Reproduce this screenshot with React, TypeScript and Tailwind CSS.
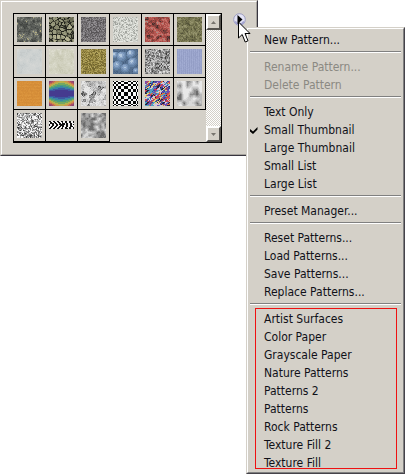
import { useState } from 'react';
import clsx from 'clsx';

type Shade = (x: number, y: number) => number;

interface Pattern {
  name: string;
  colors: string[];
  shade: Shade;
}

const SIZE = 25;

const hash = (x: number, y: number, seed: number) => {
  let h = Math.imul(x + 101, 374761393) + Math.imul(y + 57, 668265263) + Math.imul(seed, 974634777);
  h = Math.imul(h ^ (h >>> 13), 1274126177);
  h = Math.imul(h ^ (h >>> 16), 2246822519);
  return ((h ^ (h >>> 15)) >>> 0) / 4294967296;
};

// smooth value noise, sx and sy are the blob size in pixels
const noise = (seed: number, sx: number, sy = sx, contrast = 1.5): Shade => (x, y) => {
  const gx = Math.floor(x / sx);
  const gy = Math.floor(y / sy);
  const fx = x / sx - gx;
  const fy = y / sy - gy;
  const top = hash(gx, gy, seed) * (1 - fx) + hash(gx + 1, gy, seed) * fx;
  const bottom = hash(gx, gy + 1, seed) * (1 - fx) + hash(gx + 1, gy + 1, seed) * fx;
  return (top * (1 - fy) + bottom * fy - 0.5) * contrast + 0.5;
};

// blobs broken up with single pixel grain
const grainy = (seed: number, sx: number, sy: number, amount: number): Shade => {
  const base = noise(seed, sx, sy, 1.4);
  return (x, y) => base(x, y) * (1 - amount) + hash(x, y, seed + 5) * amount;
};

// nearest stone centre: its tone and the distance to the next stone's edge
const nearest = (seed: number, step: number, x: number, y: number) => {
  let first = 99;
  let second = 99;
  let tone = 0;
  const cx = Math.floor(x / step);
  const cy = Math.floor(y / step);
  for (let j = cy - 1; j <= cy + 1; j++) {
    for (let i = cx - 1; i <= cx + 1; i++) {
      const dx = (i + hash(i, j, seed)) * step - x;
      const dy = (j + hash(i, j, seed + 1)) * step - y;
      const d = Math.sqrt(dx * dx + dy * dy);
      if (d < first) {
        second = first;
        first = d;
        tone = hash(i, j, seed + 2);
      } else if (d < second) {
        second = d;
      }
    }
  }
  return { tone, edge: second - first };
};

// rounded stones with dark gaps between them
const stones = (seed: number, step: number, gap: number, grain: number): Shade => (x, y) => {
  const { tone, edge } = nearest(seed, step, x, y);
  return Math.min(1, edge / (step * gap)) * (0.55 + tone * 0.45) - hash(x, y, seed) * grain;
};

// flat angular pieces, each with its own tone
const shards = (seed: number, step: number, grain: number): Shade => (x, y) =>
  nearest(seed, step, x, y).tone * (1 - grain) + hash(x, y, seed) * grain + 0.1;

// glossy balls lit from the top left
const bubbles: Shade = (x, y) => {
  const balls = [
    [9, 8, 6],
    [18, 5, 5],
    [20, 14, 6],
    [5, 17, 6],
    [13, 20, 6],
    [2, 6, 4],
    [23, 22, 4],
  ];
  let best = 0.1 + hash(x, y, 3) * 0.15;
  balls.forEach(([bx, by, r]) => {
    const d = Math.hypot(x - bx, y - by) / r;
    if (d < 1) {
      const light = Math.hypot(x - bx + r * 0.3, y - by + r * 0.35) / r;
      best = Math.max(best, 0.92 - light * 0.6 - (by / SIZE) * 0.15);
    }
  });
  return best;
};

const checker: Shade = (x, y) => {
  const bend = (v: number) => Math.sign(v) * Math.asin(Math.min(1, Math.abs(v) / 13)) * 11;
  const a = Math.floor((bend(x - 12) + 41.5) / 2.7);
  const b = Math.floor((bend(y - 12) + 41.5) / 2.7);
  return (a + b) % 2 ? 0.9 : 0;
};

const rainbow: Shade = (x, y) => {
  const dx = Math.abs(x - 12) / 12;
  const dy = Math.abs(y - 12) / 12;
  return dy * 0.62 + dx * dx * dy * 0.4;
};

const braid: Shade = (x, y) => {
  if (y < 8 || y > 15) return 0;
  const lean = y < 12 ? y - 8 : 15 - y;
  const slant = x < 13 ? x - lean + 40 : x + 40 - Math.floor(lean / 2);
  if (hash(x, y, 4) > 0.88) return 0.4;
  return slant % 4 < 2 ? 0.4 : 0.9;
};

const GRAYS = ['#3b3b3b', '#626262', '#888888', '#aaaaaa', '#cacaca', '#e4e4e4'];

const PATTERNS: Pattern[] = [
  { name: 'Dark Slate', colors: ['#3f423f', '#4a4d49', '#555854', '#60635e', '#6e716a', '#85877c', '#b3ad80'], shade: grainy(3, 2.3, 3.4, 0.35) },
  { name: 'Pebbles', colors: ['#23241d', '#46473a', '#6b6c56', '#85866c', '#9b9c80', '#b5b392'], shade: stones(8, 4.2, 0.3, 0.15) },
  { name: 'Granite', colors: ['#575456', '#656264', '#716e71', '#7f7c7f', '#928f92'], shade: noise(5, 1, 1, 1) },
  { name: 'Light Granite', colors: ['#a2a59f', '#bbbdb7', '#cccec8', '#d5d7d1', '#dddfd9', '#e5e7e1'], shade: noise(12, 1, 1, 1) },
  { name: 'Red Rock', colors: ['#4a2f2d', '#7a403c', '#a04842', '#b55650', '#c6716a', '#a98a82'], shade: grainy(22, 2.4, 2.1, 0.35) },
  { name: 'Moss', colors: ['#55543a', '#676646', '#777650', '#85845e', '#96946e'], shade: grainy(19, 1.7, 1.6, 0.5) },
  { name: 'Pale Paper', colors: ['#c5caca', '#cacfcf', '#ced2d1', '#d1d4d3', '#d5d7d5'], shade: grainy(31, 3.3, 5.2, 0.3) },
  { name: 'Parchment', colors: ['#c8c8b4', '#cecebb', '#d2d2c1', '#d6d6c6', '#dddccf'], shade: grainy(37, 2.2, 3.4, 0.35) },
  { name: 'Gold Weave', colors: ['#72662f', '#857739', '#958641', '#a2934d', '#b3a560'], shade: noise(41, 1, 1, 1) },
  { name: 'Blue Stones', colors: ['#465f80', '#56708f', '#6482a5', '#7591b5', '#8ba6c8', '#b4c9de', '#dbe6f0'], shade: bubbles },
  { name: 'Gray Grit', colors: GRAYS, shade: grainy(48, 1.6, 1.3, 0.5) },
  { name: 'Blue Denim', colors: ['#939dc5', '#98a2ca', '#9da7ce', '#a2acd2'], shade: (x, y) => (x % 2) * 0.45 + hash(x, y, 2) * 0.45 },
  { name: 'Orange Paper', colors: ['#d28b38', '#d68e38', '#d9923b', '#dc963f'], shade: (x, y) => (y % 3) * 0.15 + hash(x, y, 9) * 0.6 },
  {
    name: 'Spectrum',
    colors: ['#453b8f', '#453b8f', '#3e58a0', '#3b84a5', '#4a9d80', '#74a861', '#b7b04b', '#d1914b', '#c26a54', '#a54c68', '#8a4470'],
    shade: rainbow,
  },
  { name: 'Broken Glass', colors: ['#4c4c4c', '#808080', '#a8a8a8', '#c4c4c4', '#d6d6d6', '#e6e6e6'], shade: shards(64, 4.5, 0.3) },
  { name: 'Checker', colors: ['#050505', '#fafafa'], shade: checker },
  {
    name: 'Confetti',
    colors: ['#25243f', '#c74355', '#50a2be', '#ded277', '#704bb1', '#db7645', '#d3c5d9', '#3e479e'],
    shade: (x, y) => hash(Math.floor((x + (y % 3)) / 2), Math.floor((y + (x % 5) * 0.5) / 1.6), 73),
  },
  {
    name: 'Soft Clouds',
    colors: ['#6c6c6c', '#8e8e8e', '#a8a8a8', '#bababa', '#cacaca', '#d8d8d8', '#e8e8e8'],
    shade: (x, y) => noise(80, 3.3, 4.3, 1.3)(x, y) + 0.1,
  },
  { name: 'Scribble', colors: ['#424242', '#777777', '#b2b2b2', '#eeeeee', '#ffffff'], shade: grainy(87, 1.3, 1.3, 0.6) },
  { name: 'Braid', colors: ['#d4d0c8', '#111111', '#f4f4f4'], shade: braid },
  { name: 'Fog', colors: ['#6c6c6c', '#858585', '#9a9a9a', '#adadad', '#c0c0c0', '#d6d6d6'], shade: grainy(94, 2.7, 2.7, 0.15) },
];

const MENU = [
  ['New Pattern...'],
  ['Rename Pattern...', 'Delete Pattern'],
  ['Text Only', 'Small Thumbnail', 'Large Thumbnail', 'Small List', 'Large List'],
  ['Preset Manager...'],
  ['Reset Patterns...', 'Load Patterns...', 'Save Patterns...', 'Replace Patterns...'],
  [
    'Artist Surfaces',
    'Color Paper',
    'Grayscale Paper',
    'Nature Patterns',
    'Patterns 2',
    'Patterns',
    'Rock Patterns',
    'Texture Fill 2',
    'Texture Fill',
  ],
];

const DISABLED = ['Rename Pattern...', 'Delete Pattern'];
const VIEWS = MENU[2];

function Thumbnail({ pattern }: { pattern: Pattern }) {
  const paths = pattern.colors.map(() => '');
  for (let y = 0; y < SIZE; y++) {
    for (let x = 0; x < SIZE; x++) {
      const level = Math.floor(pattern.shade(x, y) * paths.length);
      paths[Math.max(0, Math.min(paths.length - 1, level))] += `M${x} ${y}h1v1h-1z`;
    }
  }
  return (
    <svg viewBox="0 0 25 25" className="block size-[25px]" shapeRendering="crispEdges" aria-hidden="true">
      {paths.map((d, i) => (
        <path key={i} d={d} fill={pattern.colors[i]} />
      ))}
    </svg>
  );
}

function ScrollButton({ label, path }: { label: string; path: string }) {
  return (
    <button
      type="button"
      aria-label={label}
      className="flex h-4 w-full items-center justify-center border-2 border-t-white border-r-[#55534f] border-b-[#55534f] border-l-white bg-[#d4d0c8]"
    >
      <svg viewBox="0 0 5 3" className="h-[3px] w-[5px]" fill="#77746e">
        <path d={path} />
      </svg>
    </button>
  );
}

function PatternPalette() {
  return (
    <section
      aria-label="Patterns"
      className="w-[258px] border border-t-[#d4d0c8] border-r-[#38353f] border-b-[#38353f] border-l-[#d4d0c8] bg-[#d4d0c8]"
    >
      <div className="flex items-start justify-between border border-t-white border-r-[#a5a29c] border-b-[#a5a29c] border-l-white pt-[11px] pr-2.5 pb-[11px] pl-[11px]">
        <div className="flex border border-black">
          <div className="grid grid-cols-6 content-start">
            {PATTERNS.map((pattern) => (
              <button
                key={pattern.name}
                type="button"
                aria-label={pattern.name}
                className="size-8 border-r border-b border-black p-[3px]"
              >
                <Thumbnail pattern={pattern} />
              </button>
            ))}
          </div>
          <div className="flex w-[15px] flex-col justify-between bg-[repeating-conic-gradient(#ffffff_0_25%,#d4d0c8_0_50%)] bg-size-[2px_2px]">
            <ScrollButton label="Scroll up" path="M2.500 0L5 3H0z" />
            <ScrollButton label="Scroll down" path="M0 0h5L2.500 3z" />
          </div>
        </div>
        <button type="button" aria-label="Palette menu" className="size-[13px]">
          <svg viewBox="0 0 13 13" className="block size-[13px]">
            <circle cx="6.500" cy="6.500" r="5.800" fill="#e4e4f6" stroke="#9c9cc0" />
            <path d="M2 8.500A5 5 0 0 0 11 8.500" fill="none" stroke="#a4a4d0" strokeWidth="2" />
            <path d="M4.500 2v9l5-4.500z" fill="#000" />
          </svg>
        </button>
      </div>
    </section>
  );
}

function PaletteMenu() {
  const [view, setView] = useState('Small Thumbnail');

  return (
    <div
      role="menu"
      className="absolute top-[27px] left-[246px] w-[159px] border border-t-[#d4d0c8] border-r-[#45434a] border-b-[#45434a] border-l-[#d4d0c8] bg-[#d4d0c8]"
    >
      <div className="border border-t-white border-r-[#808080] border-b-[#808080] border-l-white p-px">
        {MENU.map((group, index) => (
          <div key={group[0]}>
            {index > 0 && (
              <div role="separator" className="mx-px h-[9px] pt-[3px]">
                <div className="h-0.5 border-t border-b border-t-[#808080] border-b-white" />
              </div>
            )}
            <div role="group" className="relative">
              {group.map((item) => (
                <button
                  key={item}
                  type="button"
                  role={VIEWS.includes(item) ? 'menuitemradio' : 'menuitem'}
                  aria-checked={VIEWS.includes(item) ? view === item : undefined}
                  disabled={DISABLED.includes(item)}
                  onClick={() => VIEWS.includes(item) && setView(item)}
                  className={clsx(
                    'flex h-[18px] w-full items-center pt-0.5 text-left text-xs whitespace-nowrap',
                    DISABLED.includes(item) ? 'text-[#8b8983]' : 'text-[#101018]',
                  )}
                >
                  <span className="flex w-[15px] shrink-0 pl-px">
                    {view === item && (
                      <svg viewBox="0 0 8 7" className="h-[7px] w-2" fill="#000">
                        <path d="M0 2L3 4.500L7.500 0V2.500L3 7L0 4.500z" />
                      </svg>
                    )}
                  </span>
                  {item}
                </button>
              ))}
              {index === MENU.length - 1 && (
                <div className="pointer-events-none absolute -top-px right-[5px] bottom-0.5 left-1.5 border border-[#ee1111]" />
              )}
            </div>
          </div>
        ))}
      </div>
    </div>
  );
}

export default function App() {
  return (
    <main className="relative min-h-screen bg-white font-['DejaVu_Sans_Condensed','Noto_Sans',sans-serif]">
      <PatternPalette />
      <PaletteMenu />
      <svg viewBox="0 0 13 22" className="pointer-events-none absolute top-[21px] left-[238px] h-[22px] w-[13px]" aria-hidden="true">
        <path
          d="M.5 1v16l3.700-3.500l3 7.500l2.800-1.200l-3-7.300H12z"
          fill="#fff"
          stroke="#000"
        />
      </svg>
    </main>
  );
}
